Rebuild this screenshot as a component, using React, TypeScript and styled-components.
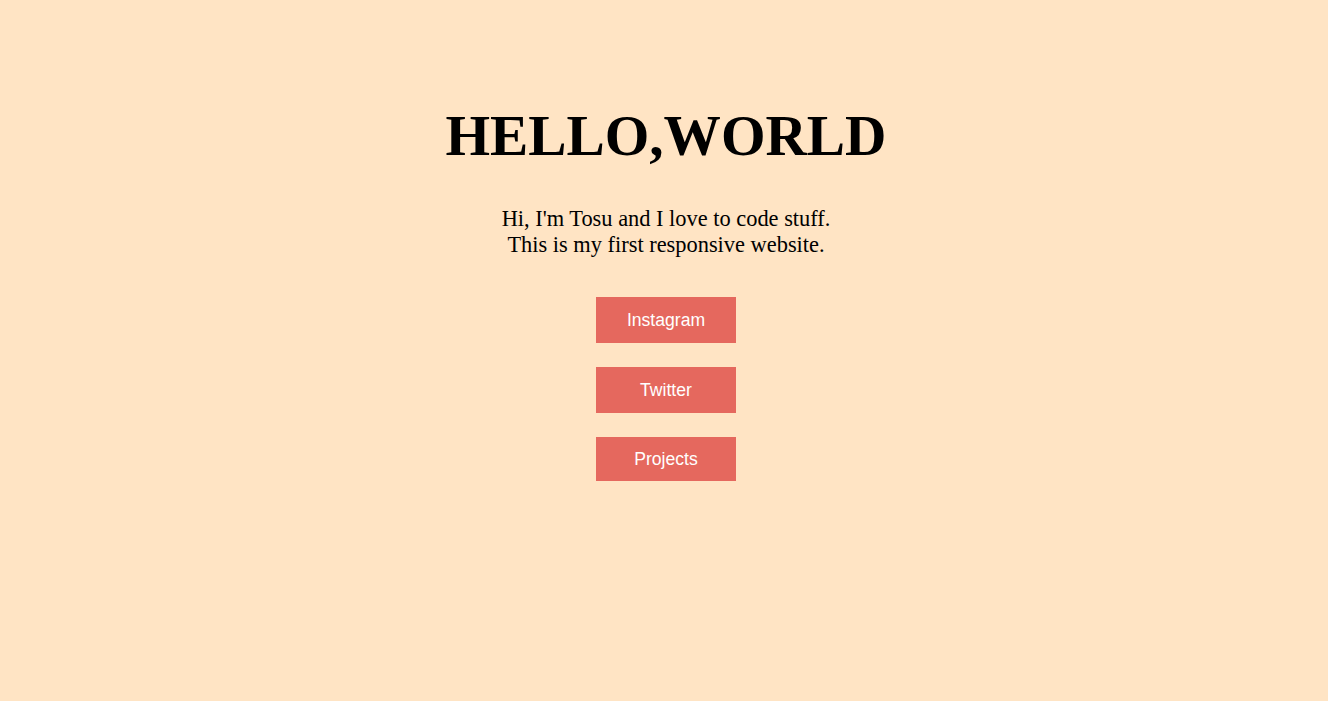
import React from "react";
import styled, { createGlobalStyle } from "styled-components";

const Global = createGlobalStyle`
  html, body {
    margin: 0;
    padding: 0;
    background: #ffe4c4;
  }
  body {
    font-family: "Liberation Serif", "Times New Roman", serif;
    color: #000;
  }
`;

const Page = styled.main`
  min-height: 701px;
  display: flex;
  flex-direction: column;
  align-items: center;
  padding: 102px 0 0 4px;
  box-sizing: border-box;
`;

const Title = styled.h1`
  margin: 0;
  font-family: "Liberation Serif", "Times New Roman", serif;
  font-weight: 700;
  font-size: 57.3px;
  line-height: 67px;
  letter-spacing: 0;
`;

const Intro = styled.p`
  margin: 37px 0 0;
  font-size: 22.4px;
  line-height: 25.5px;
  text-align: center;
`;

const Links = styled.nav`
  margin-top: 40px;
  display: flex;
  flex-direction: column;
  align-items: center;
  gap: 24px;
`;

const LinkButton = styled.a<{ $h: number }>`
  display: flex;
  align-items: center;
  justify-content: center;
  width: 140px;
  height: ${(p) => p.$h}px;
  background: #e5685e;
  color: #fff;
  text-decoration: none;
  font-family: "Liberation Sans", Arial, sans-serif;
  font-size: 17.6px;
`;

export default function App() {
  return (
    <>
      <Global />
      <Page>
        <Title>HELLO,WORLD</Title>
        <Intro>
          Hi, I'm Tosu and I love to code stuff.
          <br />
          This is my first responsive website.
        </Intro>
        <Links>
          <LinkButton href="#" $h={46}>Instagram</LinkButton>
          <LinkButton href="#" $h={46}>Twitter</LinkButton>
          <LinkButton href="#" $h={44}>Projects</LinkButton>
        </Links>
      </Page>
    </>
  );
}
